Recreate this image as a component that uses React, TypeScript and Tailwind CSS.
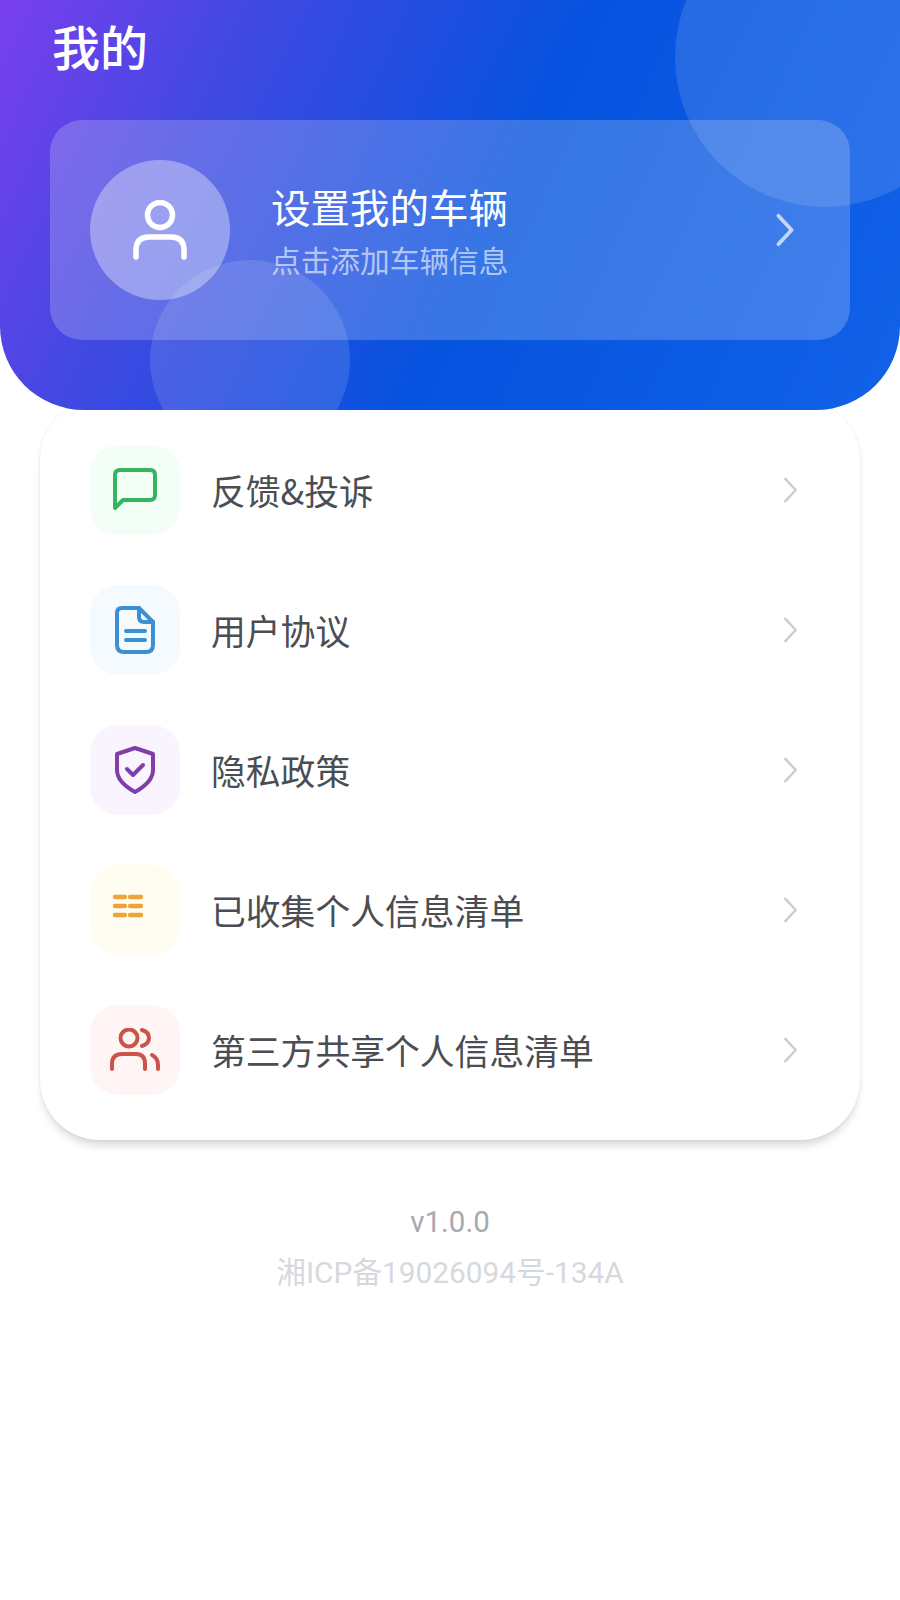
import React from "react";

const font = { fontFamily: '"Noto Sans CJK SC", "Noto Sans", sans-serif' };

function Chevron({ className, w = 3.4 }: { className: string; w?: number }) {
  return (
    <svg viewBox="0 0 20 36" fill="none" className={className} stroke="currentColor" strokeWidth={w} strokeLinecap="round" strokeLinejoin="round">
      <path d="M3 3 L17 18 L3 33" />
    </svg>
  );
}

const ChatIcon = () => (
  <svg width="44" height="44" viewBox="0 0 44 44" fill="none" stroke="#33b65c" strokeWidth="4" strokeLinecap="round" strokeLinejoin="round">
    <path d="M2 7 Q2 2 7 2 H37 Q42 2 42 7 V27 Q42 32 37 32 H10 L2 40 Z" />
  </svg>
);

const DocIcon = () => (
  <svg width="40" height="48" viewBox="0 0 40 48" fill="none" stroke="#3d8fd4" strokeWidth="4" strokeLinecap="round" strokeLinejoin="round">
    <path d="M7 2 H24 L38 16 V39 Q38 46 31 46 H9 Q2 46 2 39 V7 Q2 2 7 2 Z" />
    <path d="M24 2 V11 Q24 16 29 16 H38" />
    <path d="M11 25 H30 M11 34 H30" />
  </svg>
);

const ShieldIcon = () => (
  <svg width="40" height="48" viewBox="0 0 40 48" fill="none" stroke="#7f3fa8" strokeWidth="4" strokeLinecap="round" strokeLinejoin="round">
    <path d="M20 2 L38 8 V24 Q38 36 20 46 Q2 36 2 24 V8 Z" />
    <path d="M12 23 L18 29 L28 19" />
  </svg>
);

const ListIcon = () => (
  <svg width="30" height="24" viewBox="0 0 30 24" fill="none" stroke="#eda43a" strokeWidth="4.4" strokeLinecap="round" className="-translate-x-[7px] -translate-y-[4px]">
    <path d="M2 3 H12 M17 3 H28 M2 12 H12 M17 12 H28 M2 21 H12 M17 21 H28" />
  </svg>
);

const UsersIcon = () => (
  <svg width="50" height="44" viewBox="0 0 50 44" fill="none" stroke="#cc5349" strokeWidth="4" strokeLinecap="round" strokeLinejoin="round">
    <circle cx="19" cy="10" r="8.5" />
    <path d="M32 2 Q39 4 39 10 Q39 16 32 18" />
    <path d="M2 41 V36 Q2 26 12 26 H26 Q35 26 35 36 V41" />
    <path d="M42 27 Q48 30 48 37 V41" />
  </svg>
);

const rows = [
  { label: "反馈&投诉", bg: "bg-[#f3fef7]", icon: <ChatIcon /> },
  { label: "用户协议", bg: "bg-[#f4fafe]", icon: <DocIcon /> },
  { label: "隐私政策", bg: "bg-[#f9f4fe]", icon: <ShieldIcon /> },
  { label: "已收集个人信息清单", bg: "bg-[#fffdf2]", icon: <ListIcon /> },
  { label: "第三方共享个人信息清单", bg: "bg-[#fef5f4]", icon: <UsersIcon /> },
];

export default function App() {
  return (
    <div className="w-[900px] h-[1600px] bg-white overflow-hidden" style={font}>
      <header className="relative z-10 h-[410px] overflow-hidden rounded-b-[84px] bg-[linear-gradient(115deg,#7a3ff0_0%,#4348e2_22%,#0553df_55%,#1262e8_100%)] px-[50px]">
        <div className="absolute left-[675px] top-[-93px] w-[300px] h-[300px] rounded-full bg-white/12" />
        <div className="absolute left-[150px] top-[260px] w-[200px] h-[200px] rounded-full bg-white/12" />
        <h1 className="relative h-[120px] pt-[11px] pl-[2px] text-[48px] leading-[68px] font-medium text-white">我的</h1>
        <div className="relative flex h-[220px] items-center rounded-[32px] bg-white/20 pl-[40px] pr-[55px]">
          <div className="flex h-[140px] w-[140px] items-center justify-center rounded-full bg-white/35">
            <svg width="54" height="60" viewBox="0 0 54 60" fill="none" stroke="white" strokeWidth="5.5" strokeLinecap="round">
              <circle cx="27" cy="15" r="12.5" />
              <path d="M3 57 V50 Q3 37 16 37 H38 Q51 37 51 50 V57" />
            </svg>
          </div>
          <div className="ml-[41px] flex-1">
            <div className="text-[39.5px] leading-[52px] text-white">设置我的车辆</div>
            <div className="mt-[8px] text-[29.7px] leading-[40px] text-white/60">点击添加车辆信息</div>
          </div>
          <Chevron className="h-[34px] w-[20px] text-white/70" w={4} />
        </div>
      </header>
      <main className="relative mx-[40px] mt-[-10px] rounded-[60px] bg-white pt-[20px] pb-[20px] shadow-[0_0_3px_rgba(0,0,0,0.08),0_8px_10px_-3px_rgba(0,0,0,0.16)]">
        {rows.map((r) => (
          <div key={r.label} className="flex h-[140px] items-center pl-[50px] pr-[62px]">
            <div className={`flex h-[90px] w-[90px] items-center justify-center rounded-[28px] ${r.bg}`}>{r.icon}</div>
            <div className="ml-[31px] flex-1 text-[34.8px] leading-[48px] text-[#4a4d52]">{r.label}</div>
            <Chevron className="h-[28px] w-[15px] text-[#c9cdd2]" />
          </div>
        ))}
      </main>
      <footer className="mt-[62px] flex flex-col items-center">
        <div className="text-[29.5px] leading-[40px] text-[#a6aaaf]" style={{ fontFamily: '"Roboto", "Noto Sans CJK SC", sans-serif' }}>v1.0.0</div>
        <div className="mt-[11px] text-[29.8px] leading-[40px] text-[#d6d9dc]" style={{ fontFamily: '"Roboto", "Noto Sans CJK SC", sans-serif' }}>湘ICP备19026094号-134A</div>
      </footer>
    </div>
  );
}
